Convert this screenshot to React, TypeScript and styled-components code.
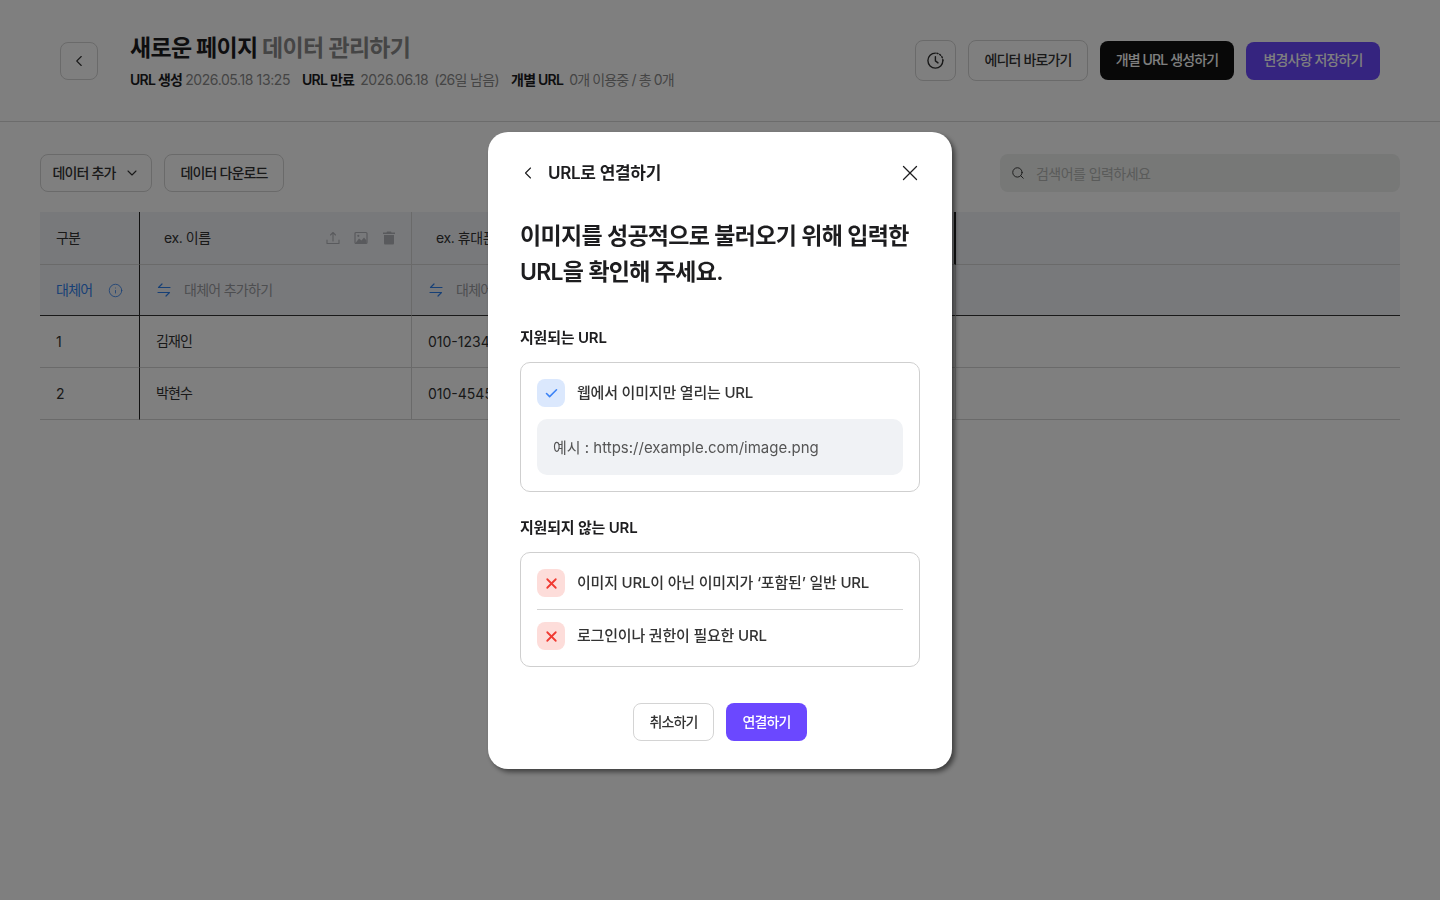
import React from "react";
import styled, { createGlobalStyle } from "styled-components";
import { Check, ChevronDown, ChevronLeft, Info, Search, X } from "lucide-react";

const Global = createGlobalStyle`
  html, body { margin: 0; padding: 0; background: #fff; }
  body { font-family: Inter, "Noto Sans CJK KR", sans-serif; color: #1d1d1f; }
  * { box-sizing: border-box; }
`;

const Page = styled.div`
  height: 900px;
  overflow: hidden;
`;
const Header = styled.header`
  height: 122px;
  border-bottom: 1px solid #d9d9d9;
  padding: 0 60px;
  display: flex;
  align-items: center;
  justify-content: space-between;
`;
const HeaderLeft = styled.div`
  display: flex;
  align-items: center;
  gap: 32px;
`;
const IconButton = styled.button<{ $size: number }>`
  width: ${(p) => p.$size}px;
  height: ${(p) => p.$size}px;
  border: 1px solid #d4d4d4;
  border-radius: 8px;
  background: #fff;
  display: flex;
  align-items: center;
  justify-content: center;
  padding: 0;
  color: #333;
`;
const TitleBlock = styled.div`
  display: flex;
  flex-direction: column;
  gap: 6px;
  padding-top: 1px;
`;
const Title = styled.h1`
  margin: 0;
  font-size: 23px;
  line-height: 32px;
  font-weight: 700;
  letter-spacing: -0.72px;
  color: #1d1d1f;
  span { color: #8a8a8a; font-weight: 600; }
`;
const Meta = styled.div`
  display: flex;
  font-size: 14px;
  line-height: 20px;
  letter-spacing: -0.4px;
  color: #8a8a8a;
  gap: 12px;
`;
const MetaItem = styled.span<{ $gap: number }>`
  display: flex;
  gap: ${(p) => p.$gap}px;
  b { color: #1d1d1f; font-weight: 600; letter-spacing: -0.75px; }
`;
const MetaKorean = styled.span`
  letter-spacing: -0.85px;
`;
const MetaNote = styled.span`
  letter-spacing: -0.65px;
`;
const HeaderActions = styled.div`
  display: flex;
  align-items: center;
  gap: 12px;
`;
const Btn = styled.button<{ $w: number; $h: number; $bg?: string; $fg?: string }>`
  width: ${(p) => p.$w}px;
  height: ${(p) => p.$h}px;
  border-radius: 8px;
  border: ${(p) => (p.$bg ? "none" : "1px solid #d4d4d4")};
  background: ${(p) => p.$bg || "#fff"};
  color: ${(p) => p.$fg || "#333"};
  font: 500 14px/20px Inter, "Noto Sans CJK KR", sans-serif;
  letter-spacing: -0.85px;
  display: flex;
  align-items: center;
  justify-content: center;
  gap: 8px;
  padding: 0 0 1px;
`;
const Content = styled.main`
  padding: 32px 40px 0;
`;
const Toolbar = styled.div`
  display: flex;
  justify-content: space-between;
  margin-bottom: 20px;
`;
const ToolGroup = styled.div`
  display: flex;
  gap: 12px;
`;
const SearchBox = styled.div`
  width: 400px;
  height: 38px;
  border-radius: 8px;
  background: #eef0ee;
  display: flex;
  align-items: center;
  gap: 11px;
  padding: 0 11px 1px;
  font-size: 14px;
  letter-spacing: -0.55px;
  color: #b4b6b4;
  svg { color: #333; }
`;
const Table = styled.div`
  display: grid;
  grid-template-columns: 100px 272px 272px 272px 1fr;
  grid-auto-rows: auto;
`;
type CellProps = { $h: number; $bg?: boolean; $bottom?: string; $right?: string };
const Cell = styled.div<CellProps>`
  height: ${(p) => p.$h}px;
  background: ${(p) => (p.$bg ? "#f1f2f7" : "#fff")};
  border-bottom: 1px solid ${(p) => p.$bottom || "#d4d4d4"};
  border-right: ${(p) => p.$right || "1px solid #d4d4d4"};
  display: flex;
  align-items: center;
  padding: 0 16px;
  font-size: 14px;
  color: #333;
  gap: 16px;
`;
const HeadTextCell = styled(Cell)`
  letter-spacing: -0.8px;
  padding-bottom: 2px;
`;
const NameCell = styled(Cell)`
  letter-spacing: -0.9px;
  padding-bottom: 3px;
`;
const HeadLabel = styled.span`
  margin-left: 8px;
  flex: 1;
  letter-spacing: -0.4px;
  padding-bottom: 2px;
`;
const HeadIcons = styled.span`
  display: flex;
  gap: 12px;
  color: #b3b5ba;
  margin-right: -2px;
`;
const SubLabelCell = styled(Cell)`
  gap: 15px;
`;
const SubLabel = styled.span`
  color: #2f80ed;
  letter-spacing: -0.7px;
  white-space: nowrap;
  flex-shrink: 0;
  padding-bottom: 2px;
`;
const Placeholder = styled.span`
  color: #9a9ca1;
  letter-spacing: -0.72px;
  margin-left: -4px;
  padding-bottom: 2px;
`;
const Overlay = styled.div`
  position: fixed;
  inset: 0;
  background: rgba(0, 0, 0, 0.5);
  display: flex;
  align-items: flex-start;
  justify-content: center;
  padding-top: 132px;
`;
const Modal = styled.section`
  width: 464px;
  height: 637px;
  background: #fff;
  border-radius: 20px;
  padding: 25px 32px 28px;
  box-shadow: 3px 3px 5px rgba(0, 0, 0, 0.5);
  display: flex;
  flex-direction: column;
`;
const ModalTop = styled.div`
  height: 32px;
  display: flex;
  align-items: center;
  gap: 10px;
  color: #1d1d1f;
`;
const ModalTitle = styled.h2`
  margin: 0;
  flex: 1;
  font-size: 17px;
  line-height: 32px;
  font-weight: 600;
  letter-spacing: -0.3px;
`;
const Heading = styled.p`
  margin: 29px 0 0;
  font-size: 23px;
  line-height: 36px;
  font-weight: 600;
  letter-spacing: -0.7px;
  color: #1d1d1f;
`;
const SectionLabel = styled.h3<{ $top: number }>`
  margin: ${(p) => p.$top}px 0 12px;
  font-size: 15px;
  line-height: 24px;
  font-weight: 600;
  letter-spacing: -0.2px;
  color: #1d1d1f;
`;
const Panel = styled.div`
  border: 1px solid #cfcfcf;
  border-radius: 10px;
  padding: 16px;
`;
const Row = styled.div`
  display: flex;
  align-items: center;
  gap: 12px;
  font-size: 15px;
  line-height: 24px;
  font-weight: 500;
  letter-spacing: -0.2px;
  color: #333;
`;
const Divider = styled.div`
  height: 1px;
  background: #d4d4d4;
  margin: 12px 0;
`;
const Badge = styled.span<{ $bg: string; $fg: string }>`
  width: 28px;
  height: 28px;
  border-radius: 8px;
  background: ${(p) => p.$bg};
  color: ${(p) => p.$fg};
  display: flex;
  align-items: center;
  justify-content: center;
`;
const Example = styled.div`
  margin-top: 12px;
  height: 56px;
  border-radius: 10px;
  background: #f0f2f5;
  padding: 0 16px 2px;
  display: flex;
  align-items: center;
  font-size: 15px;
  color: #555;
`;
const ModalActions = styled.div`
  margin-top: 36px;
  display: flex;
  justify-content: center;
  gap: 12px;
`;

const Swap = () => (
  <svg width="16" height="16" viewBox="0 0 16 16" fill="none" stroke="#2f80ed" strokeWidth="1.2" strokeLinecap="round" strokeLinejoin="round">
    <path d="M14 5.5H2.5L6 2" />
    <path d="M2 10.5h11.500L10 14" />
  </svg>
);
const Upload = () => (
  <svg width="16" height="16" viewBox="0 0 16 16" fill="none" stroke="currentColor" strokeWidth="1.1" strokeLinecap="round" strokeLinejoin="round">
    <path d="M8 11V2.500M5.500 5 8 2.500 10.500 5" />
    <path d="M2 10v3.500h12V10" />
  </svg>
);
const ImageGlyph = () => (
  <svg width="16" height="16" viewBox="0 0 16 16">
    <rect x="2" y="2.500" width="12" height="11" rx="1" fill="none" stroke="currentColor" strokeWidth="1.200" />
    <circle cx="5.300" cy="5.800" r="1.100" fill="currentColor" />
    <path d="M2.500 13 6 8.500l2.500 2 2.500-3 2.500 3V13z" fill="currentColor" />
  </svg>
);
const Trash = () => (
  <svg width="16" height="16" viewBox="0 0 16 16" fill="currentColor">
    <path d="M6 1.500h4l.5 1H14v1.500H2V2.500h3.500z" />
    <path d="M3 5h10v8.500a1 1 0 0 1-1 1H4a1 1 0 0 1-1-1z" />
  </svg>
);
const Clock = () => (
  <svg width="20" height="20" viewBox="0.6 0.4 20 20" fill="none" stroke="#333" strokeWidth="1.400" strokeLinecap="round" strokeLinejoin="round">
    <path d="M10 2.500a7.500 7.500 0 1 0 7.500 7.500" />
    <path d="M17.500 10a7.500 7.500 0 0 0-7.500-7.500" strokeDasharray="1.200 1.800" />
    <path d="M10 6v4.300l2.600 2" />
  </svg>
);

const HeadCell = ({ label }: { label: string }) => (
  <Cell $h={53} $bg>
    <HeadLabel>{label}</HeadLabel>
    <HeadIcons>
      <Upload />
      <ImageGlyph />
      <Trash />
    </HeadIcons>
  </Cell>
);
const SubCell = () => (
  <Cell $h={51} $bg $bottom="#333">
    <Swap />
    <Placeholder>대체어 추가하기</Placeholder>
  </Cell>
);

export default function App() {
  return (
    <>
      <Global />
      <Page>
        <Header>
          <HeaderLeft>
            <IconButton $size={38}>
              <ChevronLeft size={18} strokeWidth={1.5} />
            </IconButton>
            <TitleBlock>
              <Title>
                새로운 페이지 <span>데이터 관리하기</span>
              </Title>
              <Meta>
                <MetaItem $gap={3}>
                  <b>URL 생성</b> 2026.05.18 13:25
                </MetaItem>
                <MetaItem $gap={6}>
                  <b>URL 만료</b> 2026.06.18 <MetaNote>(26일 남음)</MetaNote>
                </MetaItem>
                <MetaItem $gap={6}>
                  <b>개별 URL</b> <MetaKorean>0개 이용중 / 총 0개</MetaKorean>
                </MetaItem>
              </Meta>
            </TitleBlock>
          </HeaderLeft>
          <HeaderActions>
            <IconButton $size={41}>
              <Clock />
            </IconButton>
            <Btn $w={120} $h={41}>에디터 바로가기</Btn>
            <Btn $w={134} $h={39} $bg="#111" $fg="#fff">개별 URL 생성하기</Btn>
            <Btn $w={134} $h={38} $bg="#6b48ff" $fg="#fff">변경사항 저장하기</Btn>
          </HeaderActions>
        </Header>
        <Content>
          <Toolbar>
            <ToolGroup>
              <Btn $w={112} $h={38}>
                데이터 추가 <ChevronDown size={16} strokeWidth={1.6} />
              </Btn>
              <Btn $w={120} $h={38}>데이터 다운로드</Btn>
            </ToolGroup>
            <SearchBox>
              <Search size={14} strokeWidth={1.6} />
              검색어를 입력하세요
            </SearchBox>
          </Toolbar>
          <Table>
            <HeadTextCell $h={53} $bg $right="1px solid #222">구분</HeadTextCell>
            <HeadCell label="ex. 이름" />
            <HeadCell label="ex. 휴대폰 번호" />
            <Cell $h={53} $bg $right="2px solid #222" />
            <Cell $h={53} $bg $right="none" />

            <SubLabelCell $h={51} $bg $bottom="#333" $right="1px solid #222">
              <SubLabel>대체어</SubLabel>
              <Info size={15} color="#2f80ed" strokeWidth={1.300} />
            </SubLabelCell>
            <SubCell />
            <SubCell />
            <SubCell />
            <Cell $h={51} $bg $bottom="#333" $right="none" />

            <Cell $h={52} $right="1px solid #222">1</Cell>
            <NameCell $h={52}>김재인</NameCell>
            <Cell $h={52}>010-1234-5678</Cell>
            <Cell $h={52} />
            <Cell $h={52} $right="none" />

            <Cell $h={52} $right="1px solid #222">2</Cell>
            <NameCell $h={52}>박현수</NameCell>
            <Cell $h={52}>010-4545-6767</Cell>
            <Cell $h={52} />
            <Cell $h={52} $right="none" />
          </Table>
        </Content>
      </Page>
      <Overlay>
        <Modal>
          <ModalTop>
            <ChevronLeft size={20} strokeWidth={1.300} style={{ marginLeft: -2 }} />
            <ModalTitle>URL로 연결하기</ModalTitle>
            <X size={26} strokeWidth={1.200} style={{ marginRight: -3 }} />
          </ModalTop>
          <Heading>
            이미지를 성공적으로 불러오기 위해 입력한
            <br />
            URL을 확인해 주세요.
          </Heading>
          <SectionLabel $top={36}>지원되는 URL</SectionLabel>
          <Panel>
            <Row>
              <Badge $bg="#dbe8fd" $fg="#3b82f6">
                <Check size={15} strokeWidth={2.500} />
              </Badge>
              웹에서 이미지만 열리는 URL
            </Row>
            <Example>예시 : https://example.com/image.png</Example>
          </Panel>
          <SectionLabel $top={24}>지원되지 않는 URL</SectionLabel>
          <Panel>
            <Row>
              <Badge $bg="#fdddda" $fg="#f03a32">
                <X size={17} strokeWidth={2.500} />
              </Badge>
              이미지 URL이 아닌 이미지가 ‘포함된’ 일반 URL
            </Row>
            <Divider />
            <Row>
              <Badge $bg="#fdddda" $fg="#f03a32">
                <X size={17} strokeWidth={2.500} />
              </Badge>
              로그인이나 권한이 필요한 URL
            </Row>
          </Panel>
          <ModalActions>
            <Btn $w={81} $h={38}>취소하기</Btn>
            <Btn $w={81} $h={38} $bg="#6b48ff" $fg="#fff">연결하기</Btn>
          </ModalActions>
        </Modal>
      </Overlay>
    </>
  );
}
